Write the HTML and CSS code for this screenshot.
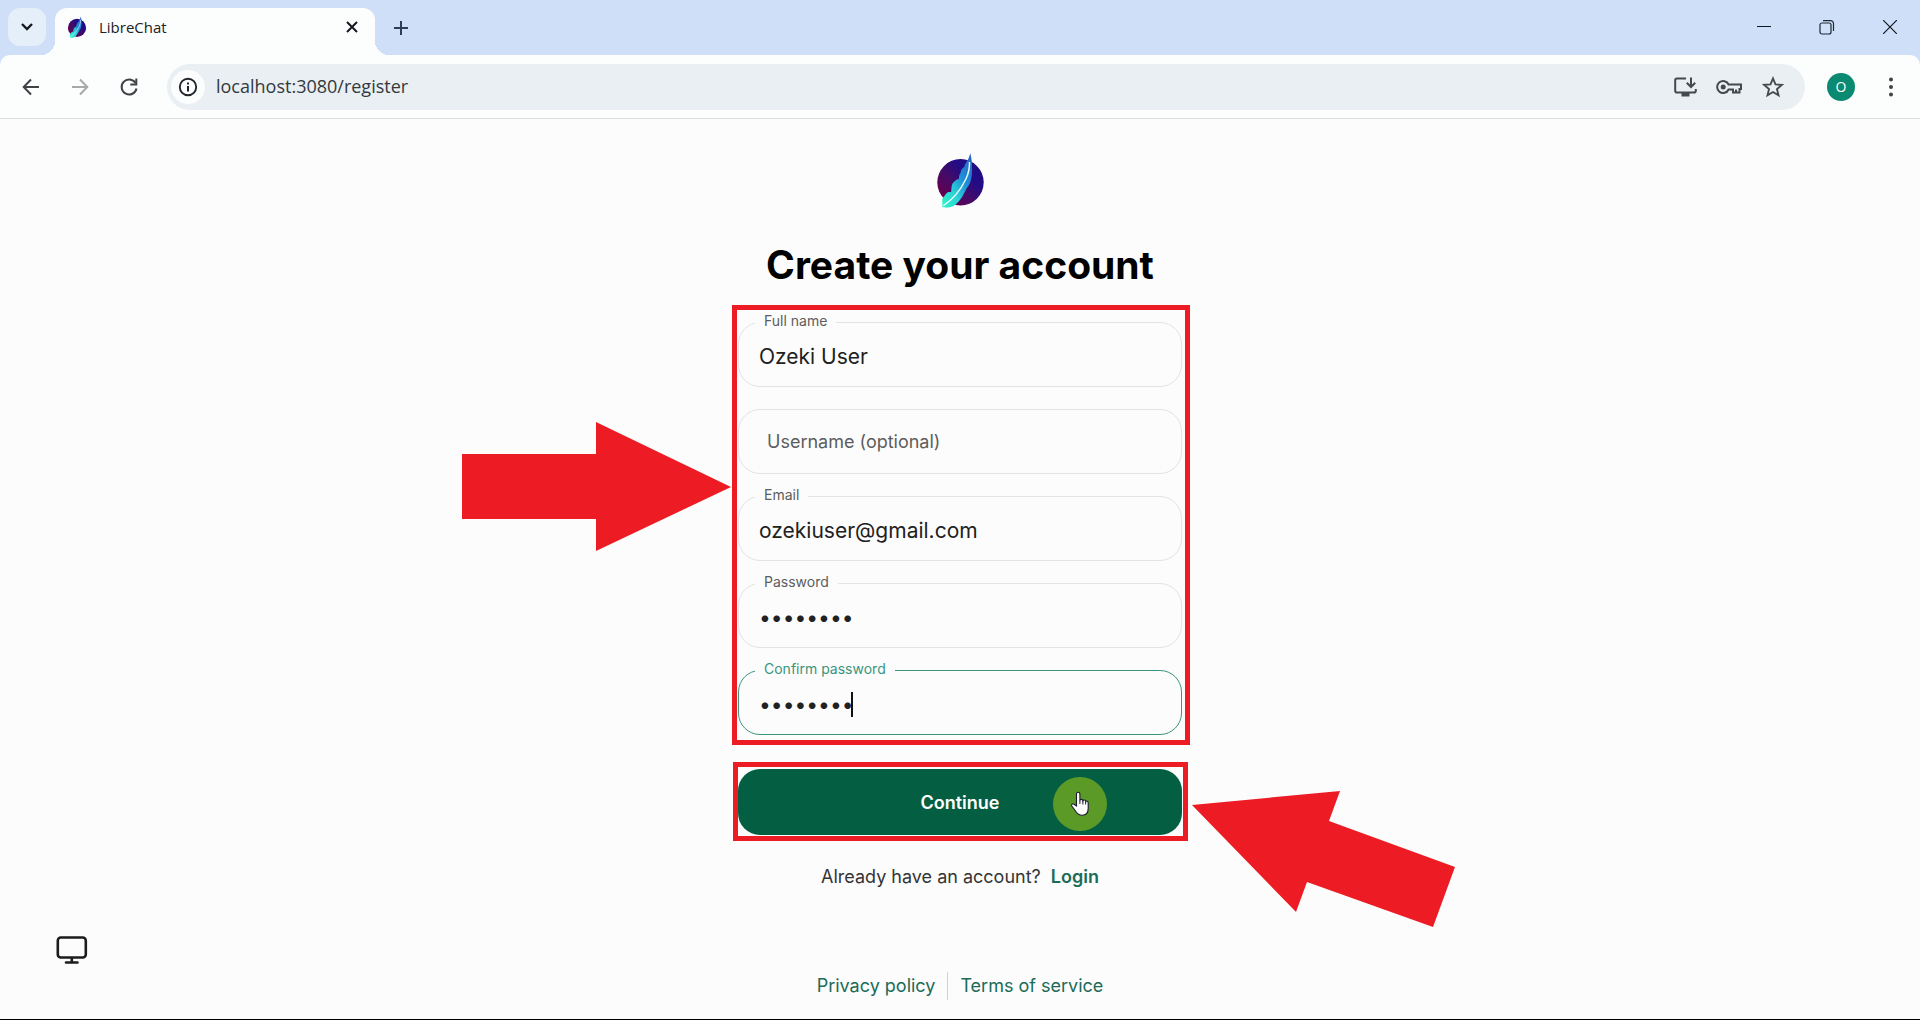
FILE: index.html
```html
<!DOCTYPE html>
<html lang="en">
<head>
    <meta charset="UTF-8">
    <meta name="viewport" content="width=device-width, initial-scale=1.0">
    <title>LibreChat</title>
    <link rel="stylesheet" href="styles.css">
</head>
<body>

<header class="browser">
    <div class="tabstrip">
        <button type="button" class="tab-search" aria-label="Search tabs">
            <svg width="14" height="10" viewBox="0 0 14 10"><path d="M2 2l5 5 5-5" fill="none" stroke="#15191e" stroke-width="2.4"/></svg>
        </button>
        <div class="tab">
            <svg class="favicon" width="20" height="22" viewBox="36 22 49 56"><use href="#logo"/></svg>
            <span class="tab-title">LibreChat</span>
            <button type="button" class="tab-close" aria-label="Close tab">
                <svg width="12" height="12" viewBox="0 0 12 12"><path d="M1 1l10 10M11 1L1 11" stroke="#15191e" stroke-width="2"/></svg>
            </button>
        </div>
        <button type="button" class="new-tab" aria-label="New tab">
            <svg width="14" height="14" viewBox="0 0 14 14"><path d="M7 0v14M0 7h14" stroke="#2c3f57" stroke-width="2"/></svg>
        </button>
        <div class="window-buttons">
            <button type="button" aria-label="Minimize">
                <svg width="14" height="14" viewBox="0 0 14 14"><path d="M0 6.5h14" stroke="#10161d"/></svg>
            </button>
            <button type="button" aria-label="Restore">
                <svg width="16" height="16" viewBox="0 0 16 16" fill="none" stroke="#1d2836" stroke-width="1.2"><rect x="1" y="4" width="11" height="11" rx="2"/><path d="M4 1.6h7.5a3 3 0 0 1 3 3V12"/></svg>
            </button>
            <button type="button" aria-label="Close">
                <svg width="14" height="14" viewBox="0 0 14 14"><path d="M0 0l14 14M14 0L0 14" stroke="#10161d" stroke-width="1.2"/></svg>
            </button>
        </div>
    </div>

    <div class="toolbar">
        <div class="nav-buttons">
            <button type="button" aria-label="Back">
                <svg width="18" height="18" viewBox="0 0 18 18"><path d="M17 9H2M9 1.5L1.7 9 9 16.5" fill="none" stroke="#3f4347" stroke-width="2"/></svg>
            </button>
            <button type="button" aria-label="Forward">
                <svg width="18" height="18" viewBox="0 0 18 18"><path d="M1 9h15M9 1.5L16.3 9 9 16.5" fill="none" stroke="#a7a9ab" stroke-width="2"/></svg>
            </button>
            <button type="button" aria-label="Reload">
                <svg width="20" height="20" viewBox="0 0 20 20"><path d="M16.5 6A7.5 7.5 0 1 0 17.5 11.5" fill="none" stroke="#3f4347" stroke-width="2"/><path d="M18.3 1.5v7h-7v-2h5v-5z" fill="#3f4347"/></svg>
            </button>
        </div>
        <div class="address">
            <button type="button" class="site-info" aria-label="Site information">
                <svg width="20" height="20" viewBox="0 0 20 20"><circle cx="10" cy="10" r="8.2" fill="none" stroke="#202428" stroke-width="1.9"/><path d="M10 9v5.5M10 5.5v2" stroke="#202428" stroke-width="2"/></svg>
            </button>
            <input type="text" class="url" aria-label="Address" value="localhost:3080/register">
            <div class="address-icons">
                <button type="button" aria-label="Install">
                    <svg width="24" height="22" viewBox="0 0 24 22"><path d="M13 2.5H4A1.8 1.8 0 0 0 2.2 4.3v10.4A1.8 1.8 0 0 0 4 16.5h17a1.8 1.8 0 0 0 1.8-1.8V13M18 1.5v9M13.8 6.8l4.200 4.2 4.200-4.2" fill="none" stroke="#45494d" stroke-width="2"/><path d="M8.5 17h8v3.5h-8z" fill="#45494d"/></svg>
                </button>
                <button type="button" aria-label="Passwords">
                    <svg width="26" height="16" viewBox="0 0 26 16"><path d="M12.6 5.5a6 6 0 1 0 0 5H17v3h6.5v-3.5H25v-4.5z" fill="none" stroke="#45494d" stroke-width="2"/><circle cx="7.2" cy="8" r="2.5" fill="#45494d"/><path d="M20 10.5v3" stroke="#45494d" stroke-width="2"/></svg>
                </button>
                <button type="button" aria-label="Bookmark">
                    <svg width="22" height="22" viewBox="0 0 22 22"><path d="M11 2.5l2.5 5.9 6.3.5-4.8 4.2 1.5 6.2L11 16l-5.5 3.3L7 13.1 2.2 8.9l6.3-.5z" fill="none" stroke="#45494d" stroke-width="1.9"/></svg>
                </button>
            </div>
        </div>
        <button type="button" class="avatar">O</button>
        <button type="button" class="menu" aria-label="Menu">
            <svg width="4" height="20" viewBox="0 0 4 20" fill="#3f4347"><circle cx="2" cy="2.5" r="2"/><circle cx="2" cy="10" r="2"/><circle cx="2" cy="17.5" r="2"/></svg>
        </button>
    </div>
</header>

<main class="page">
    <svg class="logo" width="120" height="100" viewBox="0 0 120 100" role="img" aria-label="LibreChat Logo">
        <defs>
            <linearGradient id="disc" x1="0.1" y1="0.8" x2="0.8" y2="0.1">
                <stop offset="0" stop-color="#66004f"/>
                <stop offset="0.4" stop-color="#430b68"/>
                <stop offset="0.75" stop-color="#230b86"/>
                <stop offset="1" stop-color="#200c82"/>
            </linearGradient>
            <linearGradient id="feather" x1="0.1" y1="1" x2="0.9" y2="0">
                <stop offset="0" stop-color="#2ff0c8"/>
                <stop offset="0.3" stop-color="#2cd3d8"/>
                <stop offset="0.6" stop-color="#1e8fd8"/>
                <stop offset="1" stop-color="#2a62c4"/>
            </linearGradient>
        </defs>
        <g id="logo">
            <circle cx="60.5" cy="52.3" r="23.2" fill="url(#disc)"/>
            <path d="M70.3 23c-1 4-2 6.500-3.800 9-1.300 1.800-2 3-2 4.700-2.300 1.500-3.800 3.300-3.900 6.300-1.200 1-1.700 2.800-1.600 5.800-3.500 1.200-6.500 3.500-7.300 7l-.6 6.400c-2-.6-3.900-.2-5 1.500l-3.800 5V77l3 .6c5 .3 8.400-1 11.700-4.300 4.500-4.500 6.800-9 9.300-14.300 3.500-4 5-9 5.500-14 .8-8 .2-15-1.500-22z" fill="url(#feather)"/>
            <path d="M69.5 32c.2 6-1 11.500-3.600 17-4.600 9.600-13 20.500-22.600 26.700" fill="none" stroke="#e6fbfb" stroke-width="1.500"/>
        </g>
    </svg>

    <h1>Create your account</h1>

    <form class="register">
        <div class="fields">
            <div class="field">
                <input type="text" id="name" value="Ozeki User">
                <label for="name">Full name</label>
            </div>
            <div class="field empty">
                <input type="text" id="username">
                <label for="username">Username (optional)</label>
            </div>
            <div class="field">
                <input type="email" id="email" value="ozekiuser@gmail.com">
                <label for="email">Email</label>
            </div>
            <div class="field">
                <input type="password" id="password" value="ozeki123">
                <label for="password">Password</label>
            </div>
            <div class="field active">
                <input type="password" id="confirm" value="ozeki123">
                <label for="confirm">Confirm password</label>
                <span class="caret"></span>
            </div>
            <div class="frame frame-fields"></div>
            <svg class="arrow arrow-fields" width="269" height="130" viewBox="0 0 269 130"><path d="M0 32h134V0l135 65-135 64V97H0z" fill="#ed1c24"/></svg>
        </div>

        <div class="submit">
            <button type="submit" class="continue">Continue</button>
            <div class="frame frame-submit"></div>
            <span class="click">
                <svg width="20" height="26" viewBox="0 0 20 26"><path d="M6.5 15V3a1.7 1.7 0 0 1 3.4 0v6.5c.3-1.5 2.7-1.5 3 .3.6-1.2 2.7-1 2.8.6.8-.8 2.5-.3 2.5 1.3v5.5c0 4-2 7-6 7-3.5 0-5-1.5-6.5-4L1.8 15c-.8-1.4.8-2.8 2.2-1.8z" fill="#fff" stroke="#1b1b30" stroke-width="1.1"/><path d="M9.9 9v4M12.9 10v3.5M15.7 10.5v3" stroke="#1b1b30" stroke-width="1"/></svg>
            </span>
            <svg class="arrow arrow-submit" width="263" height="136" viewBox="0 0 263 136"><path d="M0 14L148 0l-11 30 126 46-22 60-126-45-11 30z" fill="#ed1c24"/></svg>
        </div>
    </form>

    <p class="login">Already have an account? <a href="#">Login</a></p>

    <footer class="legal">
        <a href="#">Privacy policy</a>
        <span class="divider"></span>
        <a href="#">Terms of service</a>
    </footer>

    <button type="button" class="theme" aria-label="Theme">
        <svg width="32" height="30" viewBox="0 0 32 30" fill="none" stroke="#1c1c1c" stroke-width="2.6" stroke-linecap="round"><rect x="1.8" y="2.5" width="28" height="20" rx="3"/><path d="M15.8 23v4.5M10 27.5h11.5"/></svg>
    </button>
</main>

</body>
</html>
```
FILE: styles.css
```css
* {
    box-sizing: border-box;
}
body {
    margin: 0;
    min-height: 100vh;
    display: flex;
    flex-direction: column;
    font-family: Inter, sans-serif;
    background: #fcfcfc;
    border-bottom: 1px solid #000;
}
button {
    display: flex;
    align-items: center;
    justify-content: center;
    padding: 0;
    border: none;
    background: none;
    cursor: pointer;
}
a {
    color: #1a6b58;
    text-decoration: none;
}

/* browser bar */
.browser {
    font-family: "Open Sans", sans-serif;
    background: #d0dff8;
}
.tabstrip {
    display: flex;
    height: 55px;
    padding: 8px 0 0 8px;
}
.tab-search {
    width: 38px;
    height: 38px;
    border-radius: 12px;
    background: #e5effa;
}
.tab {
    position: relative;
    display: flex;
    align-items: center;
    width: 320px;
    margin-left: 9px;
    padding: 0 13px 9px 12px;
    border-radius: 12px 12px 0 0;
    background: #fcfdfd;
}
.tab::before,
.tab::after {
    content: "";
    position: absolute;
    bottom: 0;
    width: 14px;
    height: 14px;
}
.tab::before {
    left: -14px;
    background: radial-gradient(circle at 0 0, transparent 14px, #fcfdfd 14px);
}
.tab::after {
    right: -14px;
    background: radial-gradient(circle at 100% 0, transparent 14px, #fcfdfd 14px);
}
.tab-title {
    flex: 1;
    margin-left: 12px;
    font-size: 15px;
    color: #1d2125;
}
.tab-close {
    width: 20px;
    height: 20px;
}
.new-tab {
    width: 40px;
    height: 40px;
    margin-left: 6px;
}
.window-buttons {
    display: flex;
    gap: 3px;
    margin-left: auto;
}
.window-buttons button {
    width: 60px;
    height: 38px;
}
.toolbar {
    display: flex;
    align-items: center;
    height: 64px;
    padding: 0 17px 0 11px;
    border-bottom: 1px solid #dcdfe0;
    border-radius: 10px 10px 0 0;
    background: #fcfdfd;
}
.nav-buttons {
    display: flex;
    gap: 9px;
}
.nav-buttons button {
    width: 40px;
    height: 40px;
}
.address {
    flex: 1;
    display: flex;
    align-items: center;
    height: 46px;
    margin: 0 22px 0 18px;
    padding: 0 18px 0 4px;
    border-radius: 23px;
    background: #e9eff3;
}
.site-info {
    width: 34px;
    height: 34px;
    border-radius: 50%;
    background: #fcfdfd;
}
.url {
    flex: 1;
    margin-left: 11px;
    padding: 0 0 2px;
    border: none;
    outline: none;
    background: none;
    font-family: inherit;
    font-size: 18px;
    color: #33393d;
}
.address-icons {
    display: flex;
    gap: 16px;
}
.address-icons button {
    width: 28px;
    height: 28px;
}
.avatar {
    width: 28px;
    height: 28px;
    border-radius: 50%;
    background: #0b8a72;
    font-family: inherit;
    font-size: 14px;
    color: #fff;
}
.menu {
    width: 24px;
    height: 28px;
    margin-left: 24px;
}

/* register page */
.page {
    position: relative;
    flex: 1;
    display: flex;
    flex-direction: column;
    align-items: center;
    padding: 11px 0 19px;
}
h1 {
    margin: 11px 0 33px;
    font-size: 39px;
    font-weight: 700;
    line-height: 48px;
    color: #000;
}
.register {
    width: 444px;
}
.fields {
    position: relative;
    display: flex;
    flex-direction: column;
    gap: 22px;
}
.field {
    position: relative;
}
.field input {
    display: block;
    width: 100%;
    height: 65px;
    padding: 4px 20px 0;
    border: 1px solid #e3e3e3;
    border-radius: 22px;
    outline: none;
    background: #fcfcfc;
    font-family: inherit;
    font-size: 21px;
    color: #212121;
}
.field label {
    position: absolute;
    top: -10px;
    left: 17px;
    padding: 0 9px;
    font-size: 14px;
    line-height: 18px;
    color: #5d5d5d;
    background: #fcfcfc;
}
.field.empty label {
    top: 20px;
    left: 20px;
    font-size: 18px;
    line-height: 26px;
}
.field.active input {
    border-color: #3a957c;
}
.field.active label {
    color: #3a957c;
}
.caret {
    position: absolute;
    top: 22px;
    left: 113px;
    width: 2px;
    height: 25px;
    background: #111;
}
.submit {
    position: relative;
    margin-top: 34px;
}
.continue {
    width: 100%;
    height: 66px;
    border-radius: 22px;
    background: #045f42;
    font-family: inherit;
    font-size: 18px;
    font-weight: 600;
    color: #fff;
}
.login {
    margin: 28px 0 0;
    font-size: 18px;
    line-height: 28px;
    color: #343434;
}
.login a {
    margin-left: 5px;
    font-weight: 600;
}
.legal {
    display: flex;
    gap: 12px;
    margin-top: auto;
    font-size: 18px;
    line-height: 28px;
}
.divider {
    width: 1px;
    background: #d0d0d0;
}
.theme {
    position: absolute;
    left: 56px;
    bottom: 54px;
}

/* highlights drawn over the page */
.frame {
    position: absolute;
    border: 5px solid #ed1c24;
    pointer-events: none;
}
.frame-fields {
    top: -17px;
    right: -8px;
    bottom: -10px;
    left: -6px;
}
.frame-submit {
    top: -7px;
    right: -6px;
    bottom: -6px;
    left: -5px;
}
.arrow {
    position: absolute;
}
.arrow-fields {
    top: 100px;
    right: 451px;
}
.arrow-submit {
    top: 22px;
    left: 454px;
}
.click {
    position: absolute;
    top: 8px;
    right: 75px;
    display: flex;
    align-items: center;
    justify-content: center;
    width: 54px;
    height: 54px;
    border-radius: 50%;
    background: #5c9a28;
    pointer-events: none;
}
```
